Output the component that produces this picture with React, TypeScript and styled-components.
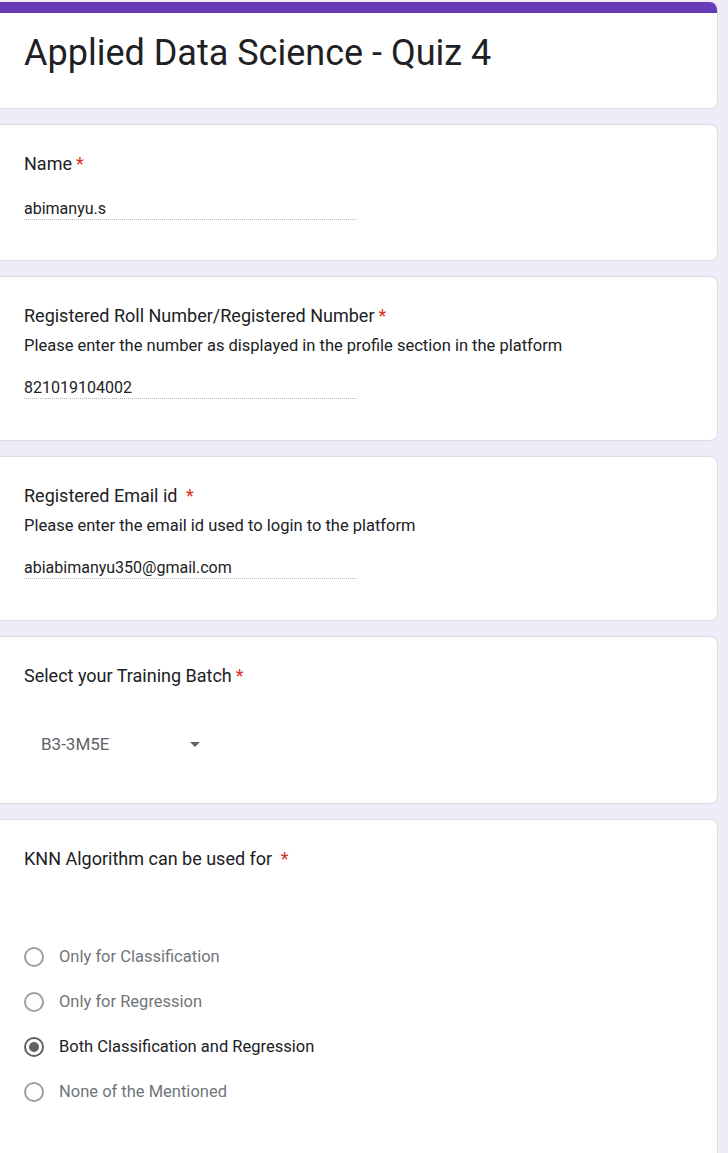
import React from "react";
import styled, { createGlobalStyle } from "styled-components";

const Global = createGlobalStyle`
  html, body { margin: 0; padding: 0; background: #f0ebf8; }
  body { font-family: Roboto, "Noto Sans", Arial, sans-serif; color: #202124; }
`;

const Page = styled.div`
  display: flex;
  flex-direction: column;
  gap: 15px;
  padding: 2px 10px 0 0;
  min-height: 1153px;
  box-sizing: border-box;
  overflow: hidden;
`;

const Card = styled.section<{ $pb?: number }>`
  margin-left: -12px;
  background: #fff;
  border: 1px solid #dadce0;
  border-radius: 8px;
  padding: 27px 24px ${(p) => p.$pb ?? 41}px 35px;
  box-sizing: border-box;
`;

const TitleCard = styled.section`
  margin-left: -12px;
  background: #fff;
  border: 1px solid #dadce0;
  border-top: none;
  border-radius: 8px;
  overflow: hidden;
  height: 107px;
  box-sizing: border-box;
`;

const TopBar = styled.div`
  height: 11px;
  background: #673ab7;
`;

const Title = styled.h1`
  margin: 0;
  padding: 15px 0 0 35px;
  font-size: 36px;
  font-weight: 400;
  line-height: 50px;
  color: #202124;
`;

const Label = styled.div`
  font-size: 18px;
  line-height: 24px;
  color: #202124;
`;

const Star = styled.span`
  color: #d93025;
  margin-left: 4px;
`;

const Desc = styled.div`
  margin-top: 8px;
  font-size: 16.5px;
  line-height: 20px;
  color: #202124;
`;

const Answer = styled.div<{ $mt: number }>`
  margin-top: ${(p) => p.$mt}px;
  width: 333px;
  font-size: 16px;
  line-height: 21px;
  color: #202124;
  border-bottom: 1px dotted #b8b8b8;
`;

const Select = styled.div`
  margin-top: 32px;
  height: 48px;
  width: 180px;
  display: flex;
  align-items: center;
  padding-left: 17px;
  font-size: 17px;
  color: #5f6368;
`;

const SelectText = styled.span`
  width: 149px;
`;

const Arrow = styled.span`
  width: 0;
  height: 0;
  border-left: 5px solid transparent;
  border-right: 5px solid transparent;
  border-top: 5px solid #5f6368;
`;

const Options = styled.div`
  margin-top: 63px;
  display: flex;
  flex-direction: column;
`;

const Option = styled.label<{ $checked?: boolean }>`
  display: flex;
  align-items: center;
  height: 45px;
  gap: 15px;
  font-size: 16.5px;
  color: ${(p) => (p.$checked ? "#202124" : "#70757a")};
`;

const Radio = styled.span<{ $checked?: boolean }>`
  width: 20px;
  height: 20px;
  flex: none;
  box-sizing: border-box;
  border-radius: 50%;
  border: 2px solid ${(p) => (p.$checked ? "#5f6368" : "#9aa0a6")};
  display: flex;
  align-items: center;
  justify-content: center;
  &::after {
    content: "";
    width: 10px;
    height: 10px;
    border-radius: 50%;
    background: #5f6368;
    display: ${(p) => (p.$checked ? "block" : "none")};
  }
`;

const options = [
  { text: "Only for Classification", checked: false },
  { text: "Only for Regression", checked: false },
  { text: "Both Classification and Regression", checked: true },
  { text: "None of the Mentioned", checked: false },
];

export default function App() {
  return (
    <>
      <Global />
      <Page>
        <TitleCard>
          <TopBar />
          <Title>Applied Data Science - Quiz 4</Title>
        </TitleCard>

        <Card $pb={40}>
          <Label>
            Name<Star>*</Star>
          </Label>
          <Answer $mt={22}>abimanyu.s</Answer>
        </Card>

        <Card $pb={41}>
          <Label>
            Registered Roll Number/Registered Number<Star>*</Star>
          </Label>
          <Desc>Please enter the number as displayed in the profile section in the platform</Desc>
          <Answer $mt={21}>821019104002</Answer>
        </Card>

        <Card $pb={41}>
          <Label>
            Registered Email id <Star>*</Star>
          </Label>
          <Desc>Please enter the email id used to login to the platform</Desc>
          <Answer $mt={21}>abiabimanyu350@gmail.com</Answer>
        </Card>

        <Card $pb={35}>
          <Label>
            Select your Training Batch<Star>*</Star>
          </Label>
          <Select>
            <SelectText>B3-3M5E</SelectText>
            <Arrow />
          </Select>
        </Card>

        <Card $pb={60}>
          <Label>
            KNN Algorithm can be used for <Star>*</Star>
          </Label>
          <Options>
            {options.map((o) => (
              <Option key={o.text} $checked={o.checked}>
                <Radio $checked={o.checked} />
                {o.text}
              </Option>
            ))}
          </Options>
        </Card>
      </Page>
    </>
  );
}
